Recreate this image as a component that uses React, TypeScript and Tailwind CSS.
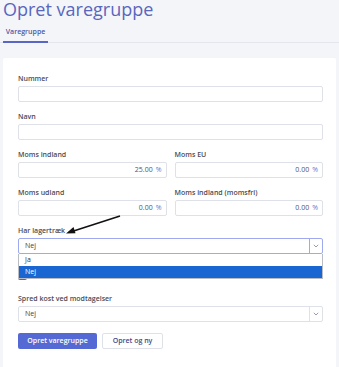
import React from 'react'

const font = { fontFamily: '"Open Sans", "Liberation Sans", sans-serif' }

function Label({ children }: { children: React.ReactNode }) {
    return <div className="h-[10px] leading-[10px] text-[7px] font-semibold text-[#4b4b55]">{children}</div>
}

function TextField({ label }: { label: string }) {
    return (
        <div className="mb-[10px]">
            <Label>{label}</Label>
            <div className="mt-[2px] h-[16px] rounded-[2px] border border-[#dfe1e8] bg-white" />
        </div>
    )
}

function PercentField({ label, value }: { label: string; value: string }) {
    return (
        <div className="mb-[10px]">
            <Label>{label}</Label>
            <div className="mt-[2px] flex h-[16px] items-center justify-end gap-[3px] rounded-[2px] border border-[#dfe1e8] bg-white pr-[4px] text-[7px] text-[#555]">
                <span>{value}</span>
                <span className="text-[#6b78c8]">%</span>
            </div>
        </div>
    )
}

function Chevron() {
    return (
        <svg width="6" height="4" viewBox="0 0 6 4" fill="none">
            <path d="M0.8 0.8 L3 3 L5.2 0.8" stroke="#8a90a6" strokeWidth="0.9" />
        </svg>
    )
}

export default function App() {
    return (
        <main style={font} className="relative flex h-[367px] w-[339px] flex-col overflow-hidden bg-[#f4f5f9]">
            <div className="flex h-[20px] items-start px-[3px]">
                <h1 className="-mt-[2px] text-[18px] leading-[22px] font-normal text-[#5966bd]">Opret varegruppe</h1>
            </div>

            <div className="flex h-[23px] shrink-0 border-b border-[#e4e6ee]">
                <div className="ml-[3px] -mb-px flex w-[45px] items-center justify-center border-b-2 border-[#5966c6] pt-[4px] text-[7px] font-semibold text-[#4d57a8]">
                    Varegruppe
                </div>
            </div>

            <section className="mx-[3px] mt-[15px] h-[309px] shrink-0 rounded-t-[2px] bg-white pl-[15px] pr-[13px] pt-[16px]">
                <TextField label="Nummer" />
                <TextField label="Navn" />

                <div className="grid grid-cols-2 gap-x-[8px]">
                    <PercentField label="Moms indland" value="25.00" />
                    <PercentField label="Moms EU" value="0.00" />
                    <PercentField label="Moms udland" value="0.00" />
                    <PercentField label="Moms indland (momsfri)" value="0.00" />
                </div>

                <Label>Har lagertræk</Label>
                <div className="relative mt-[2px]">
                    <div className="flex h-[16px] items-center rounded-[2px] border border-[#9ea9ee] bg-white">
                        <span className="flex-1 pl-[6px] text-[7px] text-[#444]">Nej</span>
                        <span className="flex h-full w-[13px] items-center justify-center border-l border-[#9ea9ee]">
                            <Chevron />
                        </span>
                    </div>
                    <ul className="absolute left-0 right-0 top-full z-10 border border-[#b9bcc4] border-t-0 bg-white text-[7px]">
                        <li className="flex h-[12px] items-center pl-[6px] text-[#333]">Ja</li>
                        <li className="flex h-[12px] items-center bg-[#1966d2] pl-[6px] text-white">Nej</li>
                    </ul>
                </div>

                <label className="mt-[15px] flex h-[12px] items-center gap-[6px] text-[7px] text-[#555]">
                    <span className="h-[9px] w-[9px] rounded-[2px] bg-[#4a63d6]" />
                    <span>Brug varegruppe ved modtagelser</span>
                </label>

                <div className="mt-[13px]">
                    <Label>Spred kost ved modtagelser</Label>
                    <div className="mt-[2px] flex h-[16px] items-center rounded-[2px] border border-[#dfe1e8] bg-white">
                        <span className="flex-1 pl-[6px] text-[7px] text-[#444]">Nej</span>
                        <span className="flex h-full w-[13px] items-center justify-center border-l border-[#dfe1e8]">
                            <Chevron />
                        </span>
                    </div>
                </div>

                <div className="mt-[11px] flex gap-[5px]">
                    <button className="h-[16px] w-[79px] rounded-[2px] bg-[#5469d4] text-[7px] font-semibold text-white">
                        Opret varegruppe
                    </button>
                    <button className="h-[16px] w-[61px] rounded-[2px] border border-[#dfe1e8] bg-white text-[7px] font-semibold text-[#3d4a8a]">
                        Opret og ny
                    </button>
                </div>
            </section>

            <svg className="pointer-events-none absolute left-0 top-0" width="339" height="367" viewBox="0 0 339 367">
                <line x1="120" y1="216" x2="72" y2="231.5" stroke="#111" strokeWidth="1.6" />
                <path d="M66 233.5 L73.5 227 L75.5 233.2 Z" fill="#111" />
            </svg>
        </main>
    )
}
